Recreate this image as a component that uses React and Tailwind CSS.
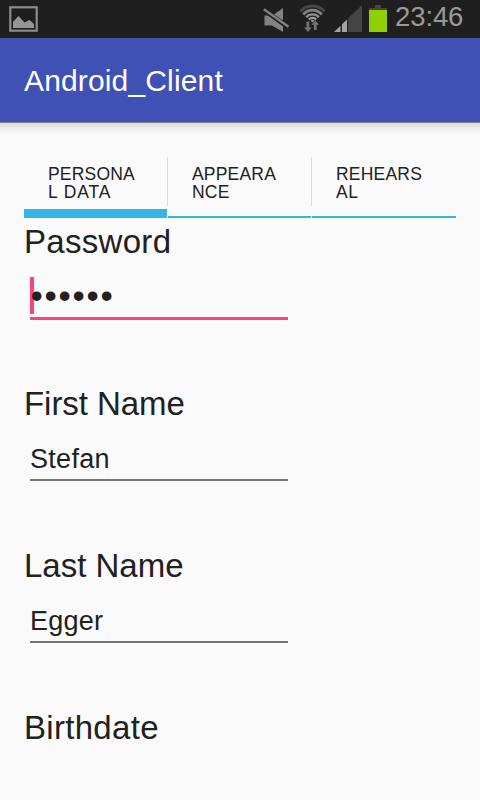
function PictureIcon() {
  return (
    <svg className="ml-[9px] mt-[6px]" width="29" height="26" viewBox="0 0 29 26">
      <rect x="1.3" y="1.3" width="26.4" height="23.4" fill="none" stroke="#8c8c8c" strokeWidth="2.2" />
      <path d="M4 22V16L9.5 10L15.5 16.5L20.5 14L25 18V22Z" fill="#969696" />
    </svg>
  );
}

function MuteIcon() {
  return (
    <svg width="27" height="26" viewBox="0 0 27 26">
      <path d="M1.500 8.500H5.500L20 18.800V25L9 18.500H1.500Z" fill="#828282" />
      <path d="M11 7.500L20 1V13.500Z" fill="#828282" />
      <path d="M0.800 2.200L25.500 19.800" stroke="#828282" strokeWidth="2.400" />
      <path d="M0 4.300L24.500 21.700" stroke="#1f1f1f" strokeWidth="1.300" />
    </svg>
  );
}

function WifiIcon() {
  return (
    <svg width="27" height="28" viewBox="-0.500 0 27 28">
      <g fill="none">
        <path d="M1 7.500A15.800 15.800 0 0 1 25 7.500" stroke="#484848" strokeWidth="3" />
        <path d="M3.800 10.500A11.900 11.900 0 0 1 22.200 10.500" stroke="#828282" strokeWidth="2.800" />
        <path d="M6.700 13.200A8.400 8.400 0 0 1 19.300 13.200" stroke="#909090" strokeWidth="2.400" />
        <path d="M9.300 15.500A5.200 5.200 0 0 1 16.700 15.500" stroke="#999" strokeWidth="2.200" />
      </g>
      <path d="M11 16.500Q13 15.200 15 16.500L13 18.500Z" fill="#999" />
      <path d="M7 17.500H9.800V23.500H12.200L8.400 28L4.600 23.500H7ZM14.400 26H17.200V20.800H19.600L15.800 16.500L12 20.800H14.400Z" fill="#747474" />
    </svg>
  );
}

function SignalIcon() {
  return (
    <svg width="28" height="27" viewBox="0 0 28 27">
      <path d="M14 27V13.500L28 0V27Z" fill="#444" />
      <path d="M0 27L6.500 20.700V27ZM8 27V19.300L13 14.500V27Z" fill="#a4a4a4" />
    </svg>
  );
}

function StatusBar() {
  return (
    <div className="flex h-[38px] bg-[#1f1f1f]">
      <PictureIcon />
      <div className="ml-[225px] mt-[7px]"><MuteIcon /></div>
      <div className="ml-[9px] mt-[4px]"><WifiIcon /></div>
      <div className="ml-[8px] mt-[5px]"><SignalIcon /></div>
      <div className="ml-[7px] mt-[5px] flex w-[18px] flex-col items-center">
        <div className="h-[3px] w-[6px] bg-[#444]" />
        <div className="h-[2px] w-full bg-[#444]" />
        <div className="h-[22px] w-full bg-[#90cf00]" />
      </div>
      <span className="ml-[8px] mt-[1px] text-[27.5px] leading-[32px] tracking-[-0.1px] text-[#999]">23:46</span>
    </div>
  );
}

function Tab({ lines, active, size, secondSpacing }) {
  return (
    <div className={`flex h-[61px] flex-col ${size}`}>
      <div className={`h-[49px] w-full pt-[8px] pl-[24px] text-[17.5px] leading-[18px] tracking-[0.2px] whitespace-nowrap ${active ? "" : "border-l border-[#dcdcdc]"}`}>
        <div>{lines[0]}</div>
        <div className={secondSpacing}>{lines[1]}</div>
      </div>
      <div className={`mt-auto bg-[#33b5e5] ${active ? "h-[9px]" : "ml-px h-[2px]"}`} />
    </div>
  );
}

function Field({ label, value, focused, labelSpacing, valueSpacing }) {
  return (
    <div className="h-[162px]">
      <div className={`text-[33px] leading-[48px] ${labelSpacing}`}>{label}</div>
      {focused ? (
        <div className="relative ml-[6px] h-[54px] w-[258px] border-b-[3px] border-[#ff4081]">
          <div className="absolute left-0 top-[11px] h-[37px] w-[4px] bg-[#ff4081]" />
          <div className="relative pl-[0.5px] pt-[8px] text-[35px] leading-[44px] tracking-[1.75px]">{value}</div>
        </div>
      ) : (
        <div className={`ml-[6px] h-[53px] w-[258px] border-b-2 border-[#747474] pt-[16px] text-[27px] leading-[30px] ${valueSpacing}`}>{value}</div>
      )}
    </div>
  );
}

export default function App() {
  return (
    <div className="h-[800px] w-[480px] overflow-hidden bg-[#fafafa] font-['Liberation_Sans',sans-serif] text-[#212121]">
      <StatusBar />
      <header className="flex h-[84px] items-center bg-[#3f51b5] pl-[24px] text-[30px] tracking-[0.15px] text-white">Android_Client</header>
      <div className="h-px bg-[#85858a]" />
      <div className="h-[12px] bg-linear-to-b from-[#dadada] via-[#f0f0f0] to-[#fafafa]" />
      <main className="px-[24px] pt-[22px]">
        <nav className="flex">
          <Tab lines={["PERSONA", "L DATA"]} size="w-[143px]" secondSpacing="tracking-[0.9px]" active />
          <Tab lines={["APPEARA", "NCE"]} size="w-[144px]" secondSpacing="tracking-[0.2px]" />
          <Tab lines={["REHEARS", "AL"]} size="w-[145px]" secondSpacing="tracking-[0.5px]" />
        </nav>
        <Field label="Password" value="••••••" labelSpacing="tracking-[0.3px]" focused />
        <Field label="First Name" value="Stefan" labelSpacing="tracking-[-0.05px]" valueSpacing="tracking-[0.3px]" />
        <Field label="Last Name" value="Egger" labelSpacing="tracking-normal" valueSpacing="tracking-[0.25px]" />
        <div className="text-[33px] leading-[48px] tracking-[0.3px]">Birthdate</div>
      </main>
    </div>
  );
}
